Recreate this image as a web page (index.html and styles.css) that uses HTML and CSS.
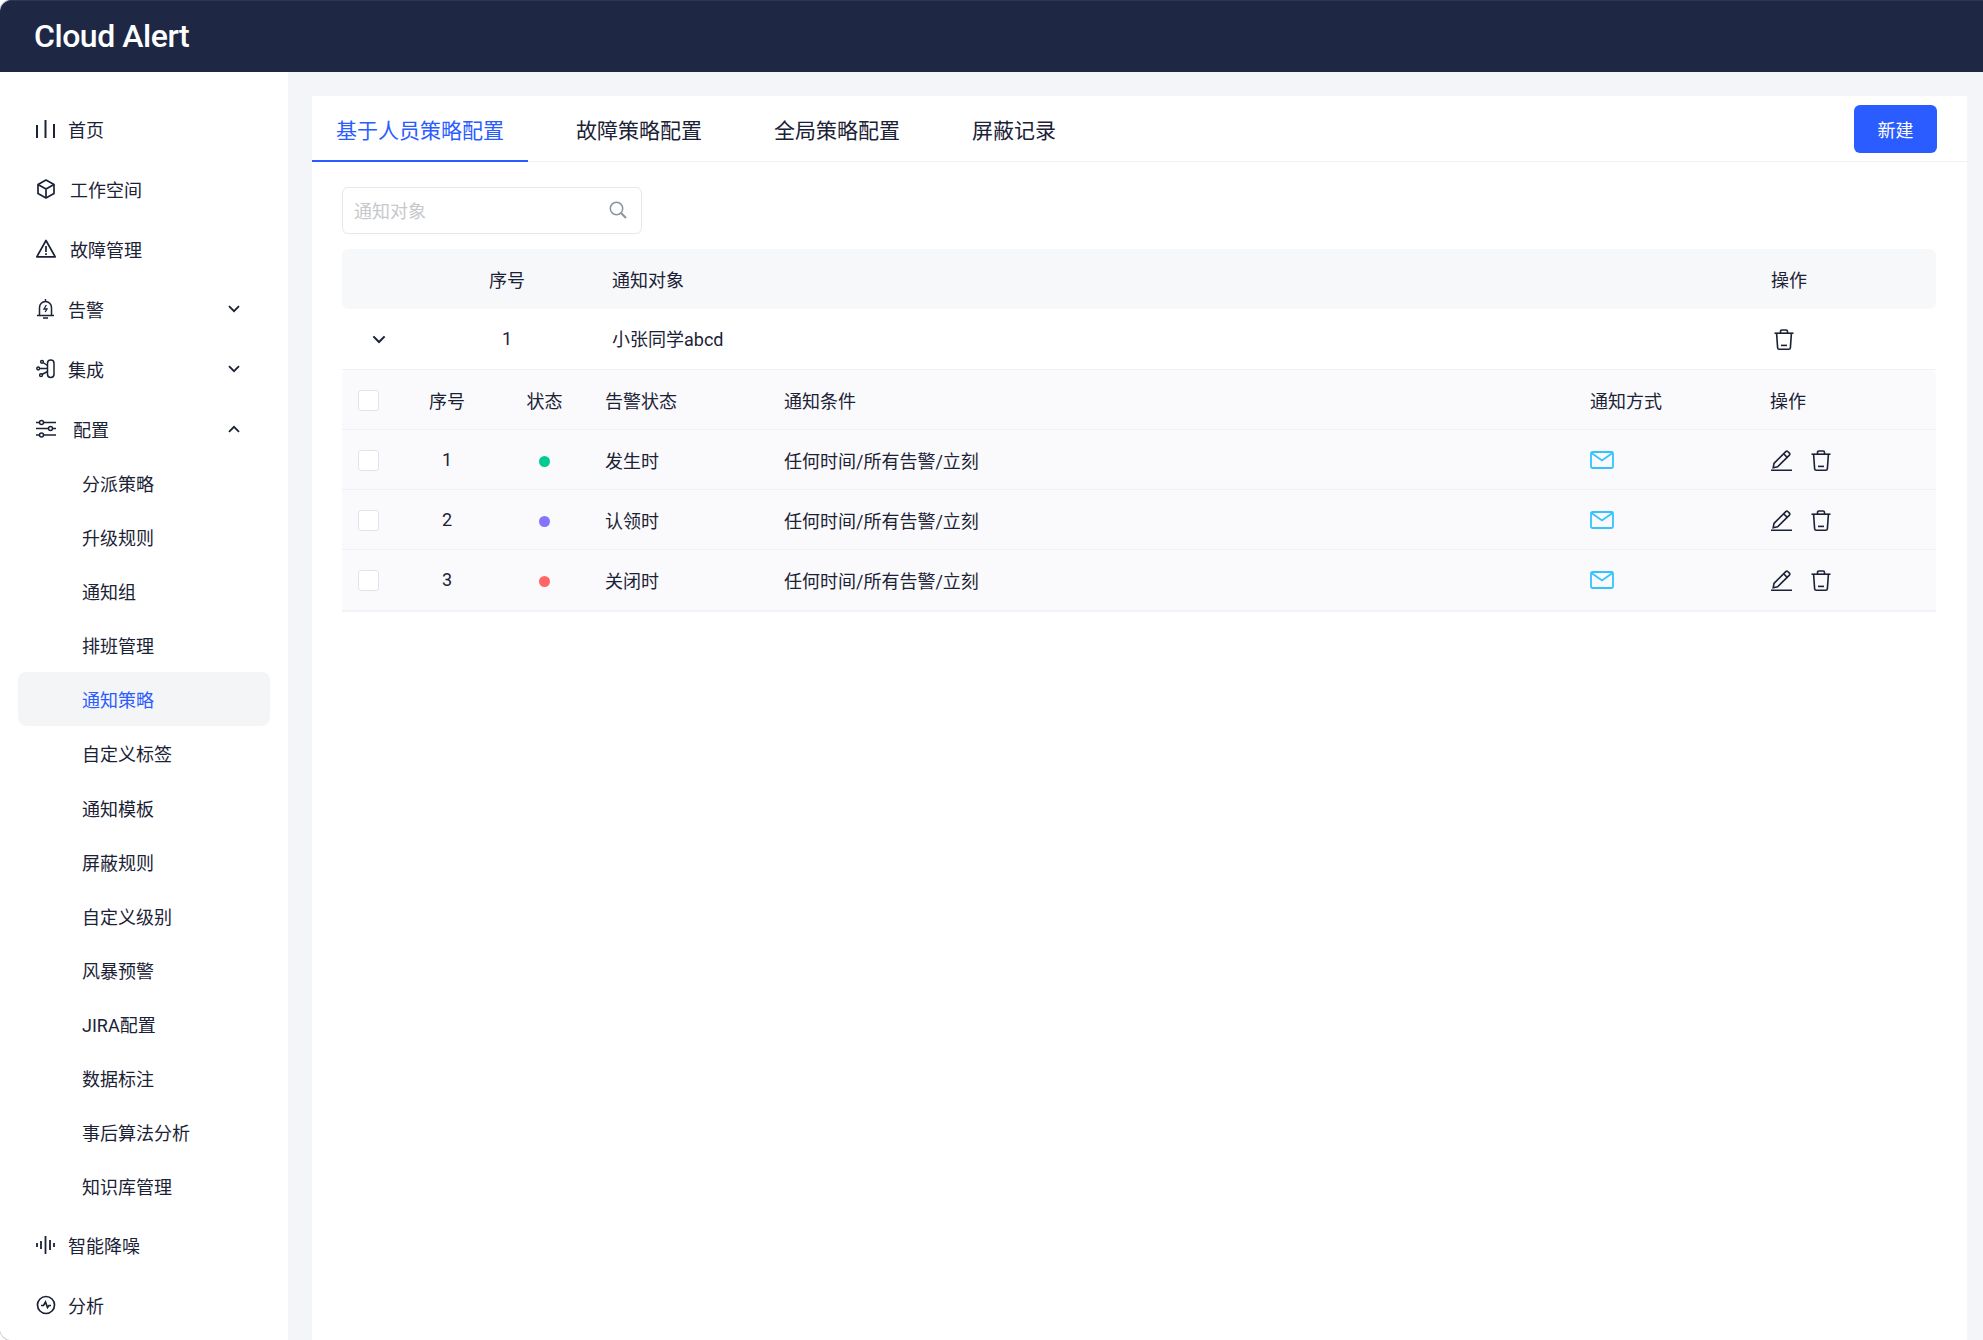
FILE: index.html
```html
<!DOCTYPE html>
<html>
<head>
    <meta charset="utf-8">
    <title>Cloud Alert</title>
    <link rel="stylesheet" href="styles.css">
</head>

<body>
    <svg class="sprite" xmlns="http://www.w3.org/2000/svg">
        <symbol id="i-trash" viewBox="0 0 20 21" fill="none" stroke="currentColor" stroke-width="1.6">
            <path d="M0.5 4.2h19"/>
            <path d="M6.5 4V2.4q0-1.4 1.4-1.4h4.2q1.4 0 1.4 1.4V4"/>
            <path d="M2.6 4.4l1 14.2q.1 1.6 1.7 1.6h9.4q1.6 0 1.7-1.6l1-14.2"/>
            <path d="M7 16.4h6"/>
        </symbol>
        <symbol id="i-edit" viewBox="0 0 21 21" fill="none" stroke="currentColor" stroke-width="1.6">
            <path d="M3 13.4L14.8 1.6q1-1 2-.1l1.6 1.6q.9 1 0 2L6.6 16.8l-4.4 1z"/>
            <path d="M12.6 3.8l3.6 3.6"/>
            <path d="M0 20.3h21"/>
        </symbol>
        <symbol id="i-mail" viewBox="0 0 24 18" fill="none" stroke="currentColor" stroke-width="1.8">
            <rect x="1" y="1" width="22" height="16" rx="1.5"/>
            <path d="M1.5 2l10.500 7.500L22.500 2"/>
        </symbol>
        <symbol id="i-chevron" viewBox="0 0 12 8" fill="none" stroke="currentColor" stroke-width="1.8">
            <path d="M1 1.2l5 5 5-5"/>
        </symbol>
    </svg>

    <div class="app">
        <header class="topbar">Cloud Alert</header>
        <div class="body-row">
            <nav class="sidebar">
                <a class="nav-item">
                    <svg class="nav-icon" viewBox="0 0 20 20" fill="none" stroke="currentColor" stroke-width="2"><path d="M1 6v13M9.500 1v18M18 5v14"/></svg>
                    <span>首页</span>
                </a>
                <a class="nav-item">
                    <svg class="nav-icon" viewBox="0 0 20 20" fill="none" stroke="currentColor" stroke-width="1.700" stroke-linejoin="round"><path d="M10 1l8 4.500v9L10 19l-8-4.500v-9z"/><path d="M2 5.500L10 10l8-4.500M10 10v9"/></svg>
                    <span class="gap-2">工作空间</span>
                </a>
                <a class="nav-item">
                    <svg class="nav-icon" viewBox="0 0 20 20" fill="none" stroke="currentColor" stroke-width="1.700" stroke-linejoin="round"><path d="M10 1.500L19.200 17.800H.8z"/><path d="M10 7v6M10 14.200v1.800"/></svg>
                    <span class="gap-2">故障管理</span>
                </a>
                <a class="nav-item">
                    <svg class="nav-icon" viewBox="0 0 20 20" fill="none" stroke="currentColor" stroke-width="1.500"><path d="M3.500 16V8.500a6 6 0 0 1 12 0V16M1 16.500h17M7 19h5M9.500 0v2.500"/><path d="M10.300 6L8 10h3l-1.800 3" stroke-width="1.300"/></svg>
                    <span>告警</span>
                    <svg class="nav-arrow"><use href="#i-chevron"/></svg>
                </a>
                <a class="nav-item">
                    <svg class="nav-icon" viewBox="0 0 20 20" fill="none" stroke="currentColor" stroke-width="1.500"><rect x="11.500" y="1" width="6.500" height="17.500" rx="3.200"/><path d="M3.500 9.500h8M7 3.500l4.500 3M6 15.500l5.500-3"/><circle cx="2.200" cy="9.500" r="1.400"/><circle cx="6" cy="2.800" r="1.400"/><circle cx="5" cy="16.200" r="1.400"/></svg>
                    <span>集成</span>
                    <svg class="nav-arrow"><use href="#i-chevron"/></svg>
                </a>
                <a class="nav-item">
                    <svg class="nav-icon" viewBox="0 0 20 20" fill="none" stroke="currentColor" stroke-width="1.500"><path d="M0 3.500h3.500M7.500 3.500H20M0 9.500h12.500M16.500 9.500H20M0 16h3.500M7.500 16H20"/><circle cx="5.500" cy="3.500" r="2"/><circle cx="14.500" cy="9.500" r="2"/><circle cx="5.500" cy="16" r="2"/></svg>
                    <span class="gap-3">配置</span>
                    <svg class="nav-arrow up"><use href="#i-chevron"/></svg>
                </a>
                <div class="subnav">
                    <a class="sub-item">分派策略</a>
                    <a class="sub-item">升级规则</a>
                    <a class="sub-item">通知组</a>
                    <a class="sub-item">排班管理</a>
                    <a class="sub-item active">通知策略</a>
                    <a class="sub-item">自定义标签</a>
                    <a class="sub-item">通知模板</a>
                    <a class="sub-item">屏蔽规则</a>
                    <a class="sub-item">自定义级别</a>
                    <a class="sub-item">风暴预警</a>
                    <a class="sub-item">JIRA配置</a>
                    <a class="sub-item">数据标注</a>
                    <a class="sub-item">事后算法分析</a>
                    <a class="sub-item">知识库管理</a>
                </div>
                <a class="nav-item">
                    <svg class="nav-icon" viewBox="0 0 20 20" fill="none" stroke="currentColor" stroke-width="1.800"><path d="M1 8v4M5 6v8M9.500 1v18M14 5v10M18 8v4"/></svg>
                    <span>智能降噪</span>
                </a>
                <a class="nav-item">
                    <svg class="nav-icon" viewBox="0 0 20 20" fill="none" stroke="currentColor" stroke-width="1.700"><circle cx="10" cy="10" r="8.500"/><path d="M5 10.500h2.500l2-3.500 2 5.500 1.500-2h2"/></svg>
                    <span>分析</span>
                </a>
            </nav>

            <main class="main">
                <section class="card">
                    <div class="tabs">
                        <a class="tab active">基于人员策略配置</a>
                        <a class="tab">故障策略配置</a>
                        <a class="tab">全局策略配置</a>
                        <a class="tab">屏蔽记录</a>
                        <button class="btn-new">新建</button>
                    </div>

                    <div class="panel">
                        <div class="search">
                            <span class="search-ph">通知对象</span>
                            <svg class="search-icon" viewBox="0 0 18 18" fill="none" stroke="currentColor" stroke-width="1.500"><circle cx="7.500" cy="7.500" r="6.200"/><path d="M12 12l5 5" stroke-width="2"/></svg>
                        </div>

                        <div class="row outer head">
                            <span></span>
                            <span class="center">序号</span>
                            <span>通知对象</span>
                            <span>操作</span>
                        </div>
                        <div class="row outer line">
                            <svg class="expand"><use href="#i-chevron"/></svg>
                            <span class="center">1</span>
                            <span>小张同学abcd</span>
                            <svg class="icon-trash outer-trash"><use href="#i-trash"/></svg>
                        </div>

                        <div class="nested">
                            <div class="row inner line first">
                                <span class="check"></span>
                                <span class="center">序号</span>
                                <span class="center">状态</span>
                                <span>告警状态</span>
                                <span>通知条件</span>
                                <span>通知方式</span>
                                <span>操作</span>
                            </div>
                            <div class="row inner line">
                                <span class="check"></span>
                                <span class="center">1</span>
                                <span class="center"><i class="dot green"></i></span>
                                <span>发生时</span>
                                <span>任何时间/所有告警/立刻</span>
                                <svg class="icon-mail"><use href="#i-mail"/></svg>
                                <span class="actions"><svg class="icon-edit"><use href="#i-edit"/></svg><svg class="icon-trash"><use href="#i-trash"/></svg></span>
                            </div>
                            <div class="row inner line">
                                <span class="check"></span>
                                <span class="center">2</span>
                                <span class="center"><i class="dot purple"></i></span>
                                <span>认领时</span>
                                <span>任何时间/所有告警/立刻</span>
                                <svg class="icon-mail"><use href="#i-mail"/></svg>
                                <span class="actions"><svg class="icon-edit"><use href="#i-edit"/></svg><svg class="icon-trash"><use href="#i-trash"/></svg></span>
                            </div>
                            <div class="row inner last">
                                <span class="check"></span>
                                <span class="center">3</span>
                                <span class="center"><i class="dot red"></i></span>
                                <span>关闭时</span>
                                <span>任何时间/所有告警/立刻</span>
                                <svg class="icon-mail"><use href="#i-mail"/></svg>
                                <span class="actions"><svg class="icon-edit"><use href="#i-edit"/></svg><svg class="icon-trash"><use href="#i-trash"/></svg></span>
                            </div>
                        </div>
                    </div>
                </section>
            </main>
        </div>
    </div>
</body>
</html>
```

FILE: styles.css
```css
:root {
    --navy: #1e2845;
    --text: #1b2236;
    --blue: #2b5cff;
    --page: #f4f5f8;
    --border: #f0f1f4;
}

* {
    box-sizing: border-box;
}

html, body {
    height: 100%;
}

body {
    margin: 0;
    background: #fff;
    color: var(--text);
    font-family: Roboto, "Noto Sans CJK SC", sans-serif;
    font-size: 18px;
    overflow: hidden;
}

.sprite {
    display: none;
}

.app {
    display: flex;
    flex-direction: column;
    height: 1340px;
    border-radius: 12px 0 0 12px;
    box-shadow: 0 0 0 1px #c8c8c8;
    overflow: hidden;
}

.topbar {
    flex: none;
    height: 72px;
    padding-left: 34px;
    border-top: 1px solid #2d3650;
    background: var(--navy);
    color: #fff;
    font-size: 32px;
    font-weight: 500;
    letter-spacing: -0.45px;
    line-height: 70px;
}

.body-row {
    display: flex;
    flex: 1;
    min-height: 0;
}

/* sidebar */
.sidebar {
    flex: none;
    width: 288px;
    padding: 27px 18px 0;
    background: #fff;
}

.nav-item {
    display: flex;
    align-items: center;
    height: 60px;
    padding-left: 18px;
}

.nav-icon {
    flex: none;
    width: 20px;
    height: 20px;
    margin-right: 12px;
}

.gap-2 {
    margin-left: 2px;
}

.gap-3 {
    margin-left: 5px;
}

.nav-arrow {
    width: 12px;
    height: 8px;
    margin-left: auto;
    margin-right: 30px;
}

.nav-arrow.up {
    transform: rotate(180deg);
}

.subnav {
    margin: -3px 0 2px;
}

.sub-item {
    display: block;
    height: 54.1px;
    padding-left: 64px;
    border-radius: 8px;
    line-height: 58px;
}

.sub-item.active {
    background: #f4f5f7;
    color: var(--blue);
}

/* main area */
.main {
    flex: 1;
    min-width: 0;
    padding: 24px 16px 0 24px;
    background: var(--page);
}

.card {
    height: 100%;
    background: #fff;
}

.tabs {
    display: flex;
    align-items: center;
    gap: 24px;
    height: 66px;
    padding-right: 30px;
    box-shadow: inset 0 -1px 0 var(--border);
}

.tab {
    height: 66px;
    padding: 0 24px;
    font-size: 21px;
    line-height: 70px;
}

.tab.active {
    border-bottom: 2px solid var(--blue);
    color: var(--blue);
}

.btn-new {
    width: 83px;
    height: 48px;
    margin-left: auto;
    padding-bottom: 2px;
    border: none;
    border-radius: 6px;
    background: var(--blue);
    color: #fff;
    font-family: inherit;
    font-size: 18px;
}

.panel {
    padding: 25px 31px 0 30px;
}

.search {
    display: flex;
    align-items: center;
    justify-content: space-between;
    width: 300px;
    height: 47px;
    padding: 0 14px 2px 11px;
    border: 1px solid #e6e7ec;
    border-radius: 6px;
}

.search-ph {
    color: #c6c8cc;
}

.search-icon {
    width: 18px;
    height: 18px;
    color: #8b93a1;
}

/* tables */
.row {
    display: grid;
    align-items: center;
    height: 60px;
}

.outer {
    grid-template-columns: 60px 210px 1159px 165px;
}

.outer.head {
    margin-top: 15px;
    border-radius: 6px;
    background: #f7f8fa;
}

.outer.line {
    height: 61px;
    padding-bottom: 3px;
}

.line {
    box-shadow: inset 0 -1px 0 var(--border);
}

.inner {
    grid-template-columns: 68px 74px 121px 179px 806px 180px 166px;
    background: #fafafc;
}

.inner > span {
    padding-bottom: 1px;
}

.first {
    border-radius: 6px 6px 0 0;
}

.last {
    box-shadow: 0 2px 0 #f2f3f8;
}

.center {
    text-align: center;
}

.expand {
    width: 14px;
    height: 9px;
    margin: 3px 0 0 30px;
}

.check {
    width: 21px;
    height: 21px;
    margin: 1px 0 0 16px;
    padding: 0;
    border: 1.500px solid #e2e3ee;
    border-radius: 3px;
    background: #fff;
}

.inner > span.check {
    padding: 0;
}

.dot {
    display: inline-block;
    width: 11px;
    height: 11px;
    border-radius: 50%;
    vertical-align: middle;
}

.green { background: #00cc92; }
.purple { background: #8674ff; }
.red { background: #ff6666; }

.icon-mail {
    width: 24px;
    height: 18px;
    color: #33c4ff;
}

.actions {
    display: flex;
    align-items: center;
    gap: 19px;
    margin-top: 1px;
    padding-left: 1px;
}

.icon-edit {
    width: 21px;
    height: 21px;
}

.icon-trash {
    width: 20px;
    height: 21px;
}

.outer-trash {
    margin: 3px 0 0 3px;
}
```
